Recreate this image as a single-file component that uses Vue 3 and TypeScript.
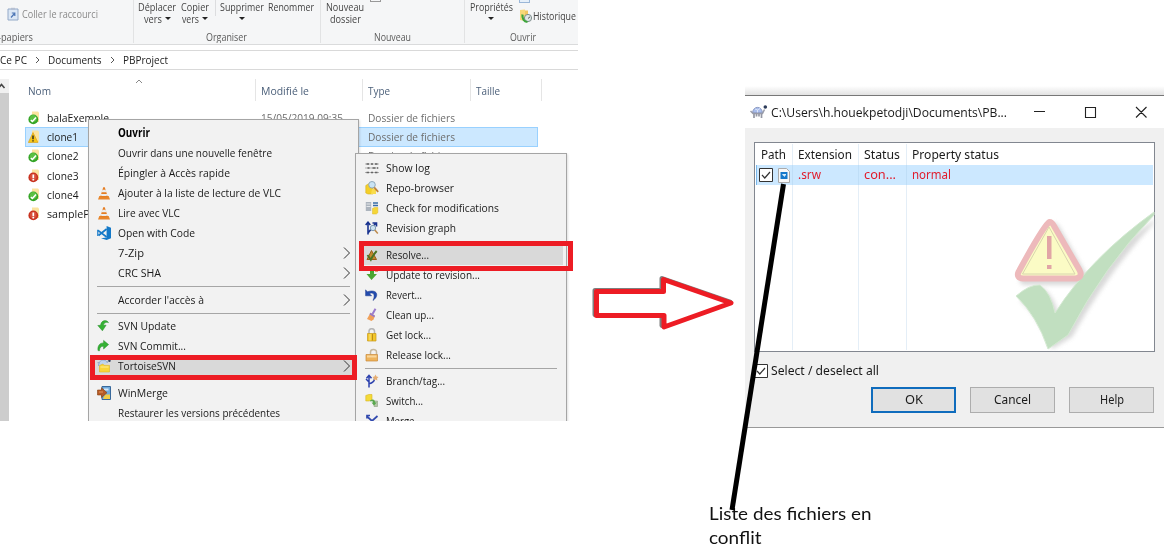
<script setup lang="ts">
type Entry = { label?: string; w?: number; icon?: string; arrow?: boolean; bold?: boolean; active?: boolean; sep?: number }
type FileRow = { name: string; w: number; state: string; selected?: boolean }

// Condenses or stretches a label so that it occupies the given advance width.
const vFit = {
  mounted(el: HTMLElement, binding: { value: number }) {
    const natural = el.getBoundingClientRect().width
    if (!natural || !binding.value) return
    el.style.transform = `scaleX(${binding.value / natural})`
    el.style.marginRight = `${binding.value - natural}px`
  },
}

const files: FileRow[] = [
  { name: 'balaExemple', w: 62, state: 'ok' },
  { name: 'clone1', w: 31, state: 'warn', selected: true },
  { name: 'clone2', w: 31.5, state: 'ok' },
  { name: 'clone3', w: 31.5, state: 'bad' },
  { name: 'clone4', w: 31.5, state: 'ok' },
  { name: 'sampleProject', w: 71, state: 'bad' },
]

const contextMenu: Entry[] = [
  { label: 'Ouvrir', w: 32, bold: true },
  { label: 'Ouvrir dans une nouvelle fenêtre', w: 154 },
  { label: 'Épingler à Accès rapide', w: 112 },
  { label: 'Ajouter à la liste de lecture de VLC', w: 163, icon: 'vlc' },
  { label: 'Lire avec VLC', w: 62, icon: 'vlc' },
  { label: 'Open with Code', w: 77, icon: 'code' },
  { label: '7-Zip', w: 26, arrow: true },
  { label: 'CRC SHA', w: 43, arrow: true },
  { sep: 7 },
  { label: "Accorder l'accès à", w: 86, arrow: true },
  { sep: 6 },
  { label: 'SVN Update', w: 58, icon: 'update' },
  { label: 'SVN Commit...', w: 68, icon: 'commit' },
  { label: 'TortoiseSVN', w: 58, icon: 'tfolder', arrow: true, active: true },
  { sep: 7 },
  { label: 'WinMerge', w: 50, icon: 'winmerge' },
  { label: 'Restaurer les versions précédentes', w: 162 },
]

const svnMenu: Entry[] = [
  { label: 'Show log', w: 44, icon: 'log' },
  { label: 'Repo-browser', w: 68, icon: 'repo' },
  { label: 'Check for modifications', w: 113, icon: 'check' },
  { label: 'Revision graph', w: 70, icon: 'graph' },
  { sep: 7 },
  { label: 'Resolve...', w: 43, icon: 'resolve', active: true },
  { label: 'Update to revision...', w: 94, icon: 'updrev' },
  { label: 'Revert...', w: 36, icon: 'revert' },
  { label: 'Clean up...', w: 48, icon: 'clean' },
  { label: 'Get lock...', w: 45, icon: 'lock' },
  { label: 'Release lock...', w: 65, icon: 'unlock' },
  { sep: 6 },
  { label: 'Branch/tag...', w: 59, icon: 'branch' },
  { label: 'Switch...', w: 37, icon: 'switch' },
  { label: 'Merge...', w: 36, icon: 'merge' },
]
</script>

<template>
  <main class="stage">
    <svg class="defs" width="0" height="0">
      <symbol id="i-ok" viewBox="0 0 14 14">
        <path d="M4 .5h6l1 1V11H4z" fill="#fbe3a0" /><circle cx="5.3" cy="8.4" r="4.9" fill="#35a527" /><circle cx="5.3" cy="7.4" r="3.4" fill="#5cc043" />
        <path d="M2.8 9.2l1.600 1.300 3.600-4" stroke="#fff" stroke-width="1.600" fill="none" />
      </symbol>
      <symbol id="i-warn" viewBox="0 0 14 14">
        <path d="M4 .5h6l1 1V12H4z" fill="#fbe3a0" /><path d="M5 2.5l5 10H.3z" fill="#f7c618" stroke="#d79a12" stroke-width=".6" />
        <path d="M5 5.5v3.8M5 10.3v1.3" stroke="#222" stroke-width="1.4" />
      </symbol>
      <symbol id="i-bad" viewBox="0 0 14 14">
        <path d="M4 .5h6l1 1V11H4z" fill="#fbe3a0" /><circle cx="5.3" cy="8.4" r="4.9" fill="#c8321f" /><circle cx="5.3" cy="8" r="3.3" fill="#d8503a" />
        <path d="M5.3 5.4v3.8M5.3 10v1.5" stroke="#fff" stroke-width="1.7" />
      </symbol>
      <symbol id="i-vlc" viewBox="0 0 14 14">
        <path d="M2.300 10h9.400l1.300 3.500H1z" fill="#e8862c" /><path d="M6.200 1.200h1.600l2.900 9.600q-3.700 1.500-7.400 0z" fill="#e57d22" />
        <path d="M5.400 3.800h3.200l.8 2.400H4.600zM4 8h6l.5 1.600q-3.500 1-7 0z" fill="#ececec" />
      </symbol>
      <symbol id="i-code" viewBox="0 0 14 14">
        <path d="M9.600 0L14 1.700v10.600L9.600 14 4 12.200l5.600-.7z" fill="#1479c8" />
        <path d="M9.600 3L1.500 9.500M1 4.400l8.600 6.600" stroke="#1479c8" stroke-width="1.700" /><path d="M.8 3.800v6.200" stroke="#1479c8" stroke-width="1.200" />
      </symbol>
      <symbol id="i-update" viewBox="0 0 14 14">
        <path d="M11.500 3.600C10 .7 4.500.5 3.500 6.300L.8 6.500l4.600 5.300 3.700-5.600-2.700.1C6.700 4 9 2.700 11.500 3.600z" fill="#35b234" stroke="#248b28" stroke-width=".5" />
      </symbol>
      <symbol id="i-commit" viewBox="0 0 14 14">
        <path d="M1 11.600C.4 7 2.500 3.800 6.600 3.900V1.400l5 4.200-5 4.400V7.300C4 7 2.600 8.500 2.500 11.800z" fill="#35b234" stroke="#248b28" stroke-width=".5" />
      </symbol>
      <symbol id="i-tfolder" viewBox="0 0 14 14">
        <path d="M1.500 7C1.500-.5 9.500-.3 10.300 4" fill="#bed3ef" stroke="#91aed6" /><path d="M.5 3.700h2M10.500 3.500l1-2.500" stroke="#93a3bd" /><circle cx="12.500" cy="1.800" r="1.200" fill="#34425e" />
        <path d="M2.500 6.500L6 5l1 1.400h5.500V13H2.500z" fill="#f9d438" stroke="#dfb522" stroke-width=".6" />
        <path d="M3.500 8h8" stroke="#ffed91" />
      </symbol>
      <symbol id="i-winmerge" viewBox="0 0 14 14">
        <path d="M5 .5h8.500v13H5z" fill="#6fa9dc" stroke="#38699c" /><path d="M7 2.500h4.500v2H7z" fill="#d5e8f8" />
        <path d="M8 8.500h5V13H6z" fill="#f3cd45" /><path d="M.5 4h4V1.800L10 6.700 4.500 11.500V9h-4z" fill="#b75b27" stroke="#87400e" stroke-width=".6" /><path d="M2 6h4" stroke="#e49860" />
      </symbol>
      <symbol id="i-log" viewBox="0 0 14 14">
        <path d="M0 3h14M0 7h14M0 11.500h14" stroke="#aaa" stroke-width=".9" />
        <path d="M1.500 3h2.500M6 3h2M10 3h2.500M2.500 7h2M7.500 7h3M12 7h1M1.500 11.500h2.500M6 11.500h2M10 11.500h2.500" stroke="#666" stroke-width="1.700" />
      </symbol>
      <symbol id="i-repo" viewBox="0 0 14 14">
        <path d="M.8 4.500L4 2.500h4V13H3l-2.200-1z" fill="#f4cf28" stroke="#d9b11d" stroke-width=".6" /><path d="M7 8h4v5H6z" fill="#f9dc4c" />
        <circle cx="7" cy="3.800" r="3.300" fill="#c9e3f4" stroke="#8fa9bb" /><path d="M9.200 6.300l4 4.500" stroke="#bf843b" stroke-width="1.800" />
      </symbol>
      <symbol id="i-check" viewBox="0 0 14 14">
        <path d="M.8 1h5.400v9H.8z" fill="#acb4bd" /><path d="M1.500 3h4M1.500 5.500h4" stroke="#e4e7ea" /><path d="M8 2h5M8 4.500h5" stroke="#396da7" stroke-width="1.500" />
        <path d="M7.500 7.500l2-1h3.300v5.300l-1.500 1.200H7.500z" fill="#f5d638" stroke="#dfbb27" stroke-width=".5" />
      </symbol>
      <symbol id="i-graph" viewBox="0 0 14 14">
        <path d="M3 13.500V1.500M.7 4L3 1.200 5.300 4M3 12L10.500 2.500M7.500 2h4v3.500" stroke="#18328f" stroke-width="1.600" fill="none" />
        <circle cx="8" cy="7" r="2.700" fill="#cbe1ef" stroke="#7e9bb4" /><path d="M9.800 9l3 3.600" stroke="#bd8b4e" stroke-width="1.500" />
      </symbol>
      <symbol id="i-resolve" viewBox="0 0 14 14">
        <path d="M6.500 2.500l5 9H2z" fill="#c08a2e" stroke="#9a5d19" /><path d="M2.500 7l3.300 4.800C7.500 8 9.500 5.500 11.700 3" stroke="#4b7424" stroke-width="1.900" fill="none" />
      </symbol>
      <symbol id="i-updrev" viewBox="0 0 14 14">
        <path d="M5 1h4v5h3L6.500 12 1.500 6H5z" fill="#4aa632" /><path d="M10 1h3v3h-3z" fill="#dfa270" />
      </symbol>
      <symbol id="i-revert" viewBox="0 0 14 14">
        <path d="M.6 1.800v6h6L4.500 5.700C8 3.500 10.800 6.700 8 12.500c6.500-4.500 4.500-12-5.700-8.700z" fill="#234cae" stroke="#18378c" stroke-width=".5" />
      </symbol>
      <symbol id="i-clean" viewBox="0 0 14 14">
        <path d="M10.500.8L7.500 6" stroke="#9a7bce" stroke-width="2" /><path d="M5.500 4.800l4.500 3-1.500 3.800-2 1.500L2 11z" fill="#f0a059" /><path d="M5.500 4.800l4.500 3-.7 1.500-4.900-3z" fill="#9378cc" />
      </symbol>
      <symbol id="i-lock" viewBox="0 0 14 14">
        <path d="M4 6V3.500C4-.2 9.500-.2 9.500 3.500V6" fill="none" stroke="#b5b5b5" stroke-width="1.500" /><path d="M2.500 5.500H11V13H2.500z" fill="#f2c72b" stroke="#c99a17" stroke-width=".7" /><path d="M5 6v6.500" stroke="#fae48a" /><path d="M7.500 6v6.500" stroke="#b98c1d" />
      </symbol>
      <symbol id="i-unlock" viewBox="0 0 14 14">
        <path d="M5.500 6.500V4C5.500.7 11.500.5 11.500 4v2.500" fill="none" stroke="#c5b89e" stroke-width="1.500" /><path d="M1 6.500h11.500V13H1z" fill="#eeb35b" stroke="#c9893a" stroke-width=".7" /><path d="M2 8.500h9.500" stroke="#f9d69d" stroke-width="2" />
      </symbol>
      <symbol id="i-branch" viewBox="0 0 14 14">
        <path d="M4 13.500V1.500M1.500 4.300L4 1.300l2.500 3M4 9.800c4-.8 5.500-2.300 5.500-5.500M4 8L1 5" stroke="#2c41ae" stroke-width="1.500" fill="none" /><path d="M10.500.5l1 2 2 .5-1.500 1.500.4 2-1.900-1-1.900 1 .4-2L7.500 3l2-.5z" fill="#e5ad70" />
      </symbol>
      <symbol id="i-switch" viewBox="0 0 14 14">
        <path d="M.8 1.500l3-1H7v5.500l-3 1H.8z" fill="#f4da38" stroke="#d6b622" stroke-width=".6" /><path d="M9 7h3.500v5.500H9z" fill="#b4c6a8" stroke="#8da081" stroke-width=".6" /><path d="M5 6.500c3-2 5-1 5 2h1.700l-2.700 3-2.500-3h1.700C8 7 6.500 7 5 7.500z" fill="#58a84e" />
      </symbol>
      <symbol id="i-merge" viewBox="0 0 14 14">
        <path d="M1.500 2L7 7l5.500-5M7 7v6.500M2 4.500V1.500h3" stroke="#3149ae" stroke-width="1.700" fill="none" />
      </symbol>
      <symbol id="i-turtle" viewBox="0 0 18 16">
        <path d="M2.500 9C3 1.500 12 1.500 12.500 9z" fill="#a9bdec" stroke="#7686b4" stroke-width=".8" /><path d="M5 5l2.500 1L10 4.500M7.500 6v2.500" stroke="#dbe5fa" fill="none" />
        <path d="M.5 7L3 9.500h9.500l2-4" stroke="#9a9daa" stroke-width="1.500" fill="none" /><circle cx="15.300" cy="3" r="1.800" fill="#2d3c5a" />
        <path d="M4 9.500V14M6.500 9.500v3M9 9.500v3M11.500 9.500V14" stroke="#9598a4" stroke-width="1.700" />
      </symbol>
    </svg>

    <section class="explorer">
      <header class="ribbon">
        <div class="group">
          <div class="paste">
            <svg width="12" height="14" viewBox="0 0 12 14"><path d="M1 2h10v11H1z" fill="#dbe7f5" stroke="#93a9c8" /><path d="M4 .8h4v2H4z" fill="#b5c0d2" /><path d="M4 10.500l3.500-4M4.800 6h3v3" stroke="#4d76b5" stroke-width="1.200" fill="none" /></svg>
            <span v-fit="76" class="t">Coller le raccourci</span>
          </div>
          <span class="caption left"><span v-fit="35" class="t">-papiers</span></span>
        </div>
        <div class="group organise">
          <div class="cmds">
            <div class="cmd move"><span v-fit="38" class="t">Déplacer</span><span class="row2"><span v-fit="18" class="t">vers</span><i class="caret" /></span></div>
            <div class="cmd copy"><span v-fit="28" class="t">Copier</span><span class="row2"><span v-fit="17" class="t">vers</span><i class="caret" /></span></div>
            <div class="cmd del"><span v-fit="44" class="t">Supprimer</span><span class="row2"><i class="caret" /></span></div>
            <div class="cmd"><span v-fit="46" class="t">Renommer</span></div>
          </div>
          <span class="caption"><span v-fit="41" class="t">Organiser</span></span>
        </div>
        <div class="group fresh">
          <div class="cmds">
            <div class="cmd folder"><span v-fit="38" class="t">Nouveau</span><span class="row2"><span v-fit="31" class="t">dossier</span></span></div>
            <i class="stub" />
          </div>
          <span class="caption"><span v-fit="37" class="t">Nouveau</span></span>
        </div>
        <div class="group open">
          <div class="cmds">
            <div class="cmd props"><span v-fit="43" class="t">Propriétés</span><span class="row2"><i class="caret" /></span></div>
            <div class="history">
              <i class="stub blue" />
              <div class="hrow">
                <svg width="14" height="14" viewBox="0 0 14 14"><path d="M1 1l5-.5V12l-5-1z" fill="#f8d879" /><path d="M6 1.500h3v9H6z" fill="#f2c661" /><circle cx="9" cy="9" r="3.600" fill="#dfe7e7" stroke="#7c8b8b" /><path d="M3.500 5.500c-.5 4 1.500 7 5 7.500" stroke="#3ca63a" stroke-width="2.200" fill="none" /><path d="M9 9.500l2-1.700" stroke="#555" fill="none" /></svg>
                <span v-fit="43" class="t">Historique</span>
              </div>
            </div>
          </div>
          <span class="caption"><span v-fit="26" class="t">Ouvrir</span></span>
        </div>
      </header>

      <nav class="address">
        <span v-fit="27" class="t">Ce PC</span>
        <svg width="5" height="8" viewBox="0 0 5 8"><path d="M1 1l3 3-3 3" fill="none" stroke="#555" /></svg>
        <span v-fit="53.500" class="t">Documents</span>
        <svg width="5" height="8" viewBox="0 0 5 8"><path d="M1 1l3 3-3 3" fill="none" stroke="#555" /></svg>
        <span v-fit="45" class="t">PBProject</span>
      </nav>

      <div class="content">
        <div class="scroll"><div class="up"><svg width="8" height="6" viewBox="0 0 8 6"><path d="M-1.500 5L1.500 1.500 4.500 5" fill="none" stroke="#444" stroke-width="1.600" /></svg></div></div>
        <div class="listing">
          <svg class="sortmark" width="8" height="5" viewBox="0 0 8 5"><path d="M1 4l3-3 3 3" fill="none" stroke="#888" /></svg>
          <div class="heads">
            <span class="h name"><span v-fit="23" class="t">Nom</span></span>
            <span class="h date"><span v-fit="48" class="t">Modifié le</span></span>
            <span class="h type"><span v-fit="22" class="t">Type</span></span>
            <span class="h size"><span v-fit="24" class="t">Taille</span></span>
          </div>
          <div v-for="f in files" :key="f.name" class="file" :class="{ selected: f.selected }">
            <svg width="14" height="14"><use :href="`#i-${f.state}`" /></svg>
            <span class="fname"><span v-fit="f.w" class="t">{{ f.name }}</span></span>
            <span class="fdate"><span v-fit="82" class="t">15/05/2019 09:35</span></span>
            <span class="ftype"><span v-fit="87" class="t">Dossier de fichiers</span></span>
          </div>
        </div>
      </div>

      <div class="menu main">
        <template v-for="(m, n) in contextMenu" :key="n">
          <hr v-if="m.sep" :style="{ height: m.sep + 'px' }">
          <div v-else class="item" :class="{ bold: m.bold, active: m.active }">
            <span class="ico"><svg v-if="m.icon" width="14" height="14"><use :href="`#i-${m.icon}`" /></svg></span>
            <span v-fit="m.w!" class="t">{{ m.label }}</span>
            <svg v-if="m.arrow" class="more" width="8" height="12" viewBox="0 0 8 12"><path d="M1 .5L6.500 6 1 11.500" fill="none" stroke="#333" /></svg>
          </div>
        </template>
      </div>
      <div class="menu sub">
        <template v-for="(m, n) in svnMenu" :key="n">
          <hr v-if="m.sep" :style="{ height: m.sep + 'px' }">
          <div v-else class="item" :class="{ active: m.active }">
            <span class="ico"><svg v-if="m.icon" width="14" height="14"><use :href="`#i-${m.icon}`" /></svg></span>
            <span v-fit="m.w!" class="t">{{ m.label }}</span>
          </div>
        </template>
      </div>
      <div class="mark tortoise" />
      <div class="mark resolve" />
    </section>

    <div class="between">
      <svg width="150" height="60" viewBox="588 272 150 60">
        <path d="M595 290.500H662V278.500L730 302 662 325.500V314.500H595z" fill="none" stroke="#7f7f7f" stroke-width="5" stroke-linejoin="round" />
        <path d="M596.500 291.500H663.500V279.500L731 303 664 327V315.500H596.500z" fill="#fff" stroke="#ed1c24" stroke-width="5" stroke-linejoin="round" />
      </svg>
    </div>

    <section class="right">
      <div class="dialog">
        <div class="titlebar">
          <svg width="18" height="16"><use href="#i-turtle" /></svg>
          <span v-fit="236" class="t">C:\Users\h.houekpetodji\Documents\PB...</span>
          <svg class="winbtns" width="116" height="14" viewBox="0 0 116 14"><path d="M1 6.500h11M52.500 2.500h10v10h-10zM103 2l10.500 10.500M113.500 2L103 12.500" fill="none" stroke="#222" stroke-width="1.100" /></svg>
        </div>
        <div class="list">
          <svg class="watermark" width="144" height="140" viewBox="1010 210 144 140">
            <defs><filter id="soft" x="-20%" y="-20%" width="140%" height="140%"><feGaussianBlur stdDeviation="2" /></filter></defs>
            <g filter="url(#soft)" fill="#ccc" opacity=".75" transform="translate(4 4)">
              <path d="M1016 296Q1030 284 1040 285Q1051 293 1055 313Q1090 258 1150 216V219Q1104 268 1068 333L1048 345Q1037 316 1016 296z" />
              <path d="M1049 218.500Q1041 230 1016 272Q1014 281 1021 281H1078Q1086 280 1083 271L1055 222Q1052 218 1049 218.500z" />
            </g>
            <path d="M1016 296Q1030 284 1040 285Q1051 293 1055 313Q1090 258 1154 212V215Q1104 266 1068 335L1048 349Q1037 316 1016 296z" fill="#c1dfc0" stroke="#d4ead2" />
            <path d="M1049.500 222Q1044 225 1018.500 272Q1016 278 1023 278.500H1076Q1083 277 1079.500 270L1054 226Q1052 222 1049.500 222z" fill="#fbfbc5" stroke="#edb9bb" stroke-width="6" stroke-linejoin="round" />
            <path d="M1049 227L1022.500 274H1075z" fill="none" stroke="#d8d4ae" stroke-width="1" />
            <path d="M1047 236h4.500v23H1047zM1047 265h4.500v4H1047z" fill="#e1a5a6" />
          </svg>
          <div class="lrow lhead">
            <span class="c1"><span v-fit="25" class="t">Path</span></span>
            <span class="c2"><span v-fit="54" class="t">Extension</span></span>
            <span class="c3"><span v-fit="36" class="t">Status</span></span>
            <span class="c4"><span v-fit="87" class="t">Property status</span></span>
          </div>
          <div class="lrow conflict">
            <span class="c1">
              <svg width="14" height="14" viewBox="0 0 14 14"><path d="M.5.500h13v13H.5z" fill="#fff" stroke="#333" /><path d="M3 7l2.800 3L11 4" fill="none" stroke="#333" stroke-width="1.200" /></svg>
              <svg class="doc" width="12" height="15" viewBox="0 0 12 15"><path d="M.5.500H8.500L11.500 3.500v11H.5z" fill="#f8f8f8" stroke="#aaa" /><path d="M2.500 4h7v7h-7z" fill="#1679cb" /><path d="M4 6h4v1.500H7V9L5 7.500z" fill="#d9effc" /></svg>
            </span>
            <span class="c2"><span v-fit="23" class="t">.srw</span></span>
            <span class="c3"><span v-fit="32" class="t">con...</span></span>
            <span class="c4"><span v-fit="39" class="t">normal</span></span>
          </div>
          <div class="lrow rest"><span class="c1" /><span class="c2" /><span class="c3" /><span class="c4" /></div>
        </div>
        <label class="all">
          <svg width="14" height="14" viewBox="0 0 14 14"><path d="M.5.500h13v13H.5z" fill="#fff" stroke="#333" /><path d="M3 7l2.800 3L11 4" fill="none" stroke="#333" stroke-width="1.200" /></svg>
          <span v-fit="108" class="t">Select / deselect all</span>
        </label>
        <div class="buttons">
          <button class="primary"><span v-fit="18" class="t">OK</span></button>
          <button><span v-fit="37" class="t">Cancel</span></button>
          <button><span v-fit="24" class="t">Help</span></button>
        </div>
      </div>
    </section>

    <p class="note"><span v-fit="162.500" class="t">Liste des fichiers en</span><br><span v-fit="52.500" class="t">conflit</span></p>
    <svg class="pointer" width="70" height="335" viewBox="722 180 70 335"><path d="M783.500 184L732 510" stroke="#000" stroke-width="5" /></svg>
  </main>
</template>

<style>
body { background: #fff; }
</style>

<style scoped>
.stage { position: relative; width: 1164px; height: 545px; overflow: hidden; display: grid; grid-template-columns: 578px 167px 419px; background: #fff; font: 11.500px/14px "Open Sans", "Noto Sans", sans-serif; color: #1a1a1a; }
.stage * { box-sizing: border-box; }
.defs { position: absolute; }
svg { display: block; flex: none; overflow: visible; }
.t { display: inline-block; white-space: nowrap; transform-origin: 0 50%; flex: none; }

.explorer { position: relative; width: 578px; height: 421px; overflow: hidden; display: flex; flex-direction: column; }
.ribbon { height: 45px; background: #f5f6f7; border-bottom: 1px solid #dadbdc; display: grid; grid-template-columns: 134px 187px 144px 113px; font-size: 10.500px; line-height: 12px; color: #444; flex: none; }
.group { display: flex; flex-direction: column; justify-content: space-between; height: 43px; border-right: 1px solid #e2e3e4; overflow: hidden; }
.group:last-child { border: 0; }
.caption { text-align: center; height: 12px; color: #5a5a5a; }
.caption.left { text-align: left; margin-left: -2px; }
.paste { display: flex; align-items: center; gap: 3px; padding: 7px 0 0 7px; color: #8a8a8a; }
.cmds { display: flex; align-items: flex-start; height: 26px; }
.cmd { display: flex; flex-direction: column; align-items: center; padding-top: 1px; }
.organise .cmds { padding-left: 4px; }
.organise .caption { padding-right: 2px; }
.move { margin-right: 5px; }
.copy { padding-right: 7px; margin-right: 4px; background: linear-gradient(#dcdddf, #dcdddf) right top / 1px 16px no-repeat; }
.del { margin-right: 4px; }
.row2 { display: flex; align-items: center; gap: 3px; height: 12px; }
.caret { border: 3px solid transparent; border-top: 3px solid #222; border-bottom: 0; margin-top: -2px; }
.fresh .cmds { padding-left: 5px; }
.stub { width: 11px; height: 2px; border: solid #999; border-width: 0 1px 1px; margin-left: 6px; }
.stub.blue { height: 3px; margin: 0 0 6px; border-color: #9bb7d8; background: #e6f0fa; display: block; }
.open .cmds { padding-left: 4px; }
.props { width: 44px; }
.history { margin-left: 6px; }
.hrow { display: flex; align-items: center; }
.open .caption { padding-left: 2px; }

.address { display: flex; align-items: center; gap: 8px; margin-top: 5px; height: 20px; border: solid #d9d9d9; border-width: 1px 0; flex: none; color: #222; }
.content { display: flex; flex: 1; padding-top: 9px; }
.scroll { width: 9px; background: #cdcdcd; flex: none; }
.up { height: 14px; background: #f0f0f0; padding-top: 4px; overflow: hidden; }
.listing { position: relative; padding-left: 16px; width: 529px; flex: none; }
.sortmark { position: absolute; left: 126px; top: 0; }
.heads { display: flex; height: 22px; margin-bottom: 7px; color: #4c607a; line-height: 24px; }
.h { border-right: 1px solid #e5e5e5; flex: none; }
.name { width: 231px; padding-left: 3px; }
.date { width: 107px; padding-left: 5px; }
.type { width: 108px; padding-left: 5px; }
.size { width: 71px; padding-left: 5px; }
.file { display: flex; align-items: center; height: 19.300px; padding-left: 2px; border: 1px solid transparent; }
.file.selected { background: #cce8ff; border-color: #99d1ff; }
.fname { width: 219px; padding-left: 5px; flex: none; }
.fdate { width: 107px; color: #6d6d6d; flex: none; }
.ftype { color: #6d6d6d; }

.menu { position: absolute; background: #f2f2f2; border: 1px solid #a5a5a5; box-shadow: 1px 1px 2px rgba(0, 0, 0, .12); }
.menu.main { left: 88px; top: 119px; width: 271px; height: 320px; padding: 3px 6px 0 6px; }
.menu.sub { left: 355px; top: 153px; width: 212px; height: 290px; padding: 4px 3px 0 7px; }
.menu hr { margin: 0; border: 0; background: linear-gradient(#a6a6a6, #a6a6a6) 2px 3px / calc(100% - 4px) 1px no-repeat; }
.menu.sub hr { background-size: calc(100% - 8px) 1px; }
.item { display: flex; align-items: center; height: 20px; padding-left: 2px; }
.item.active { background: #d9d9d9; }
.item.bold { font-weight: 700; color: #000; }
.ico { width: 21px; flex: none; }
.more { margin-left: auto; margin-right: 1px; }
.mark { position: absolute; border: 5px solid #ed1c24; }
.mark.tortoise { left: 90px; top: 355px; width: 267px; height: 25px; }
.mark.resolve { left: 359px; top: 241px; width: 214px; height: 30px; }

.between { padding: 272px 0 0 10px; }
.right { padding-top: 86px; }
.dialog { height: 342px; background: linear-gradient(#fff, #e2e2e2) 0 0 / 100% 9px no-repeat, #f0f0f0; border-bottom: 1px solid #999; padding-top: 9px; font-family: "Noto Sans", "Open Sans", sans-serif; font-size: 12.500px; line-height: 16px; }
.titlebar { display: flex; align-items: center; height: 33px; background: #fff; border-top: 1px solid #777; padding-left: 5px; font-family: "Open Sans", sans-serif; font-size: 13px; }
.titlebar > .t { margin-left: 3px; }
.winbtns { margin-left: auto; margin-right: 15px; }
.list { position: relative; margin: 14px 9px 0; width: 401px; height: 210px; border: 1px solid #828790; background: #fff; padding: 1px; display: flex; flex-direction: column; }
.watermark { position: absolute; right: 0; bottom: 1px; }
.lrow { position: relative; display: grid; grid-template-columns: 37px 66px 48px 1fr; align-items: center; flex: none; }
.lrow > span { height: 100%; display: flex; align-items: center; border-right: 1px solid #e4eef7; padding-left: 5px; }
.lrow > .c4 { border-right: 0; }
.lhead { height: 21px; }
.conflict { height: 20px; background: #cce8ff; color: #e01b2c; border-left: 1px solid #79b7ea; grid-template-columns: 36px 66px 48px 1fr; }
.conflict > span { border-color: #bfdef7; }
.conflict > .c1 { padding-left: 2px; }
.doc { margin-left: 5px; }
.rest { flex: 1; }
.all { display: flex; align-items: center; gap: 3px; margin: 11px 0 0 9px; height: 16px; }
.buttons { display: flex; gap: 14px; justify-content: flex-end; margin: 8px 10px 0 0; }
button { width: 85px; height: 26px; padding: 0; background: #e1e1e1; border: 1px solid #adadad; font: inherit; color: inherit; }
button.primary { border: 2px solid #0f6cbd; }

.note { position: absolute; left: 709px; top: 501px; margin: 0; font: 18px/24px Lato, "Open Sans", sans-serif; color: #111; }
.pointer { position: absolute; left: 722px; top: 180px; }
</style>
